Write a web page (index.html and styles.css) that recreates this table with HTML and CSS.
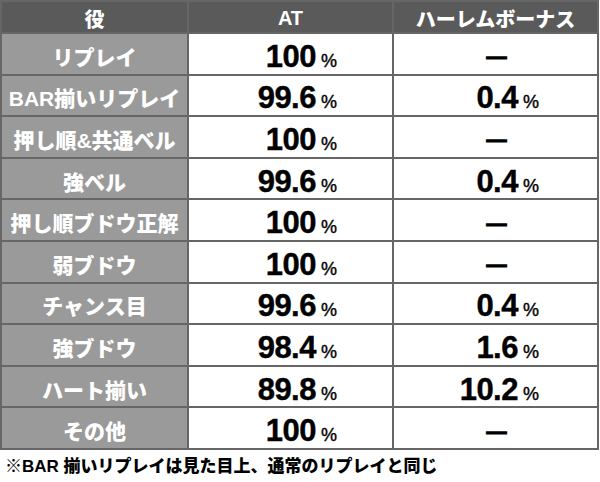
FILE: index.html
```html
<!DOCTYPE html>
<html lang="ja">
<head>
<meta charset="utf-8">
<link rel="stylesheet" href="styles.css">
</head>
<body>
<div class="table">
  <div class="cell head">役</div>
  <div class="cell head">AT</div>
  <div class="cell head">ハーレムボーナス</div>

  <div class="cell role">リプレイ</div>
  <div class="cell num at"><b>100</b><span class="pct">%</span></div>
  <div class="cell num none"><span class="dash">—</span></div>

  <div class="cell role">BAR揃いリプレイ</div>
  <div class="cell num at"><b>99.6</b><span class="pct">%</span></div>
  <div class="cell num hb"><b>0.4</b><span class="pct">%</span></div>

  <div class="cell role">押し順&amp;共通ベル</div>
  <div class="cell num at"><b>100</b><span class="pct">%</span></div>
  <div class="cell num none"><span class="dash">—</span></div>

  <div class="cell role">強ベル</div>
  <div class="cell num at"><b>99.6</b><span class="pct">%</span></div>
  <div class="cell num hb"><b>0.4</b><span class="pct">%</span></div>

  <div class="cell role">押し順ブドウ正解</div>
  <div class="cell num at"><b>100</b><span class="pct">%</span></div>
  <div class="cell num none"><span class="dash">—</span></div>

  <div class="cell role">弱ブドウ</div>
  <div class="cell num at"><b>100</b><span class="pct">%</span></div>
  <div class="cell num none"><span class="dash">—</span></div>

  <div class="cell role">チャンス目</div>
  <div class="cell num at"><b>99.6</b><span class="pct">%</span></div>
  <div class="cell num hb"><b>0.4</b><span class="pct">%</span></div>

  <div class="cell role">強ブドウ</div>
  <div class="cell num at"><b>98.4</b><span class="pct">%</span></div>
  <div class="cell num hb"><b>1.6</b><span class="pct">%</span></div>

  <div class="cell role">ハート揃い</div>
  <div class="cell num at"><b>89.8</b><span class="pct">%</span></div>
  <div class="cell num hb"><b>10.2</b><span class="pct">%</span></div>

  <div class="cell role">その他</div>
  <div class="cell num at"><b>100</b><span class="pct">%</span></div>
  <div class="cell num none"><span class="dash">—</span></div>
</div>
<p class="note">※BAR 揃いリプレイは見た目上、通常のリプレイと同じ</p>
</body>
</html>
```

FILE: styles.css
```css
html, body {
  margin: 0;
  padding: 0;
  background: #ffffff;
}
body {
  width: 600px;
  height: 482px;
  overflow: hidden;
  font-family: "Liberation Sans", "Noto Sans CJK JP", sans-serif;
  font-weight: 700;
}
.table {
  display: grid;
  grid-template-columns: 185px 203px 203px;
  grid-template-rows: 30px repeat(10, 1fr);
  gap: 2px;
  padding: 2px;
  width: 599px;
  height: 450px;
  box-sizing: border-box;
  background: #666666;
}
.cell {
  display: flex;
  align-items: center;
  justify-content: center;
  background: #ffffff;
  box-sizing: border-box;
}
.head {
  background: #5a5a5a;
  color: #ffffff;
  font-size: 20px;
  font-weight: 900;
  padding-top: 2px;
}
.role {
  background: #9a9a9a;
  color: #ffffff;
  font-size: 21px;
  font-weight: 900;
  padding-top: 4px;
  white-space: nowrap;
}
.num {
  color: #000000;
  align-items: baseline;
  align-content: center;
  flex-wrap: wrap;
  padding-top: 5px;
}
.num b {
  font-size: 31px;
  font-weight: 700;
  line-height: 1;
  letter-spacing: -0.5px;
  -webkit-text-stroke: 0.4px #000;
}
.pct {
  font-size: 18px;
  font-weight: 400;
  margin-left: 5px;
  -webkit-text-stroke: 0.4px #000;
}
.at {
  justify-content: flex-end;
  padding-right: 55px;
}
.hb {
  justify-content: flex-end;
  padding-right: 58px;
}
.none {
  justify-content: center;
  padding-right: 0;
  padding-left: 2px;
}
.dash {
  font-size: 20px;
  line-height: 1;
  -webkit-text-stroke: 1.2px #000;
}
.note {
  margin: 0;
  padding: 6px 0 0 5px;
  font-size: 17px;
  font-weight: 900;
  line-height: 22px;
  color: #000;
  white-space: nowrap;
}
```
